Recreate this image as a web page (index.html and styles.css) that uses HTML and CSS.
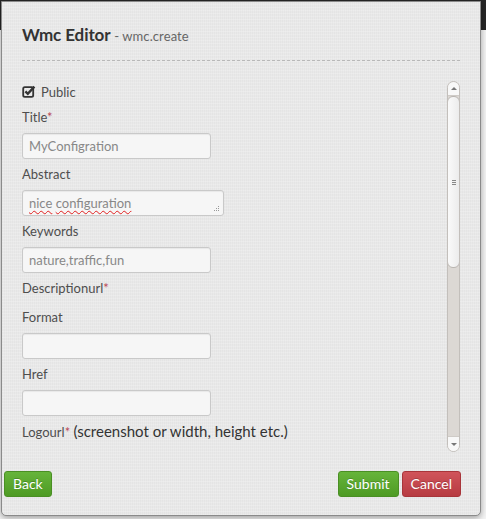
FILE: index.html
```html
<!DOCTYPE html>
<html lang="en">
<head>
<meta charset="utf-8">
<title>Wmc Editor</title>
<link rel="stylesheet" href="styles.css">
</head>
<body>
<div class="navbar"></div>
<div class="modal">
  <div class="modal-header">
    <h3 class="modal-title">Wmc Editor <small class="subtitle">- wmc.create</small></h3>
  </div>
  <div class="modal-body">
    <form class="form">
      <label class="check-row">
        <svg class="check-icon" width="14" height="13" viewBox="0 0 14 13">
          <rect x="1.2" y="2.2" width="10" height="9.6" rx="1.6" fill="none" stroke="#333" stroke-width="1.8"/>
          <path d="M3.4 6.4 L5.8 8.8 L12.4 1.6" fill="none" stroke="#333" stroke-width="2.4" stroke-linejoin="miter"/>
        </svg>
        <span>Public</span>
      </label>
      <label class="field-label">Title<span class="req">*</span></label>
      <div class="input">MyConfigration</div>
      <label class="field-label">Abstract</label>
      <div class="input textarea"><span class="misspelled">nice</span> <span class="misspelled">configuration</span>
        <svg class="grip" width="7" height="7" viewBox="0 0 7 7">
          <rect x="5" y="1" width="1" height="1" fill="#999"/>
          <rect x="3" y="3" width="1" height="1" fill="#999"/>
          <rect x="5" y="3" width="1" height="1" fill="#999"/>
          <rect x="1" y="5" width="1" height="1" fill="#999"/>
          <rect x="3" y="5" width="1" height="1" fill="#999"/>
          <rect x="5" y="5" width="1" height="1" fill="#999"/>
        </svg>
      </div>
      <label class="field-label">Keywords</label>
      <div class="input">nature,traffic,fun</div>
      <label class="field-label field-label-gap">Descriptionurl<span class="req">*</span></label>
      <label class="field-label">Format</label>
      <div class="input"></div>
      <label class="field-label">Href</label>
      <div class="input"></div>
      <label class="field-label">Logourl<span class="req">*</span> <span class="hint">(screenshot or width, height etc.)</span></label>
    </form>
    <div class="scrollbar">
      <div class="sb-btn sb-up"><span class="tri-up"></span></div>
      <div class="sb-thumb"><span class="grip-line"></span><span class="grip-line"></span><span class="grip-line"></span></div>
      <div class="sb-track"></div>
      <div class="sb-btn sb-down"><span class="tri-down"></span></div>
    </div>
  </div>
  <div class="modal-footer">
    <button class="btn btn-success">Back</button>
    <div class="footer-right">
      <button class="btn btn-success">Submit</button>
      <button class="btn btn-danger">Cancel</button>
    </div>
  </div>
</div>
</body>
</html>
```
FILE: styles.css
```css
html, body {
  margin: 0;
  padding: 0;
}
body {
  background: #f4f4f4;
  font-family: Lato, "Liberation Sans", sans-serif;
  font-size: 13px;
  color: #4e4e4e;
  position: relative;
  width: 486px;
  height: 519px;
  overflow: hidden;
}
.navbar {
  height: 30px;
  background: #262626;
}
.modal {
  position: absolute;
  left: 1px;
  top: 1px;
  width: 478px;
  height: 513px;
  background-color: #e9e9e9;
  background-image:
    repeating-linear-gradient(0deg, rgba(255,255,255,0.18) 0 1px, transparent 1px 3px),
    repeating-linear-gradient(90deg, rgba(0,0,0,0.02) 0 1px, transparent 1px 2px);
  border: 1px solid #8a8a8a;
  border-radius: 0 0 5px 5px;
  box-shadow: 0 2px 6px rgba(0,0,0,0.35);
  display: flex;
  flex-direction: column;
}
.modal-header {
  flex: none;
  margin: 0 20px;
  padding-top: 20px;
  height: 38px;
  border-bottom: 1px dashed #b8b8b8;
  box-sizing: content-box;
}
.modal-title {
  margin: 0;
  font-size: 17px;
  line-height: 26px;
  font-weight: 700;
  color: #333;
  letter-spacing: -0.1px;
}
.subtitle {
  font-size: 13px;
  font-weight: 400;
  color: #666;
  letter-spacing: 0.1px;
}
.modal-body {
  flex: none;
  display: flex;
  padding: 20px 20px 0 20px;
  height: 371px;
  overflow: hidden;
}
.form {
  flex: 1;
  display: flex;
  flex-direction: column;
  align-items: flex-start;
  margin: 0;
}
.form > * {
  flex-shrink: 0;
}
.check-row {
  display: flex;
  align-items: center;
  height: 22px;
  margin-bottom: 5px;
  gap: 5px;
}
.check-icon {
  display: block;
  margin-top: -1px;
}
.field-label {
  display: block;
  line-height: 18px;
  height: 18px;
  margin-bottom: 7px;
  white-space: nowrap;
}
.field-label-gap {
  margin-bottom: 11px;
}
.req {
  color: #b94a58;
}
.hint {
  font-size: 15px;
  color: #333;
}
.input {
  position: relative;
  box-sizing: border-box;
  width: 189px;
  height: 26px;
  margin-bottom: 6px;
  padding: 0 6px;
  line-height: 24px;
  font-size: 13px;
  color: #888;
  background: #f6f6f6;
  border: 1px solid #c9c9c9;
  border-radius: 3px;
  box-shadow: inset 0 1px 1px rgba(0,0,0,0.06);
  white-space: nowrap;
}
.textarea {
  width: 202px;
}
.misspelled {
  text-decoration: underline wavy #e02020;
  text-decoration-thickness: 1px;
  text-underline-offset: 2px;
}
.grip {
  position: absolute;
  right: 3px;
  bottom: 3px;
}
.scrollbar {
  width: 13px;
  flex: none;
  box-sizing: border-box;
  display: flex;
  flex-direction: column;
  border: 1px solid #c3bfbb;
  border-radius: 7px;
  background: #dcd8d4;
  overflow: hidden;
}
.sb-btn {
  height: 13px;
  flex: none;
  background: #f8f8f8;
  display: flex;
  align-items: center;
  justify-content: center;
}
.sb-up {
  border-bottom: 1px solid #cfcbc7;
}
.sb-down {
  border-top: 1px solid #cfcbc7;
  height: 14px;
}
.tri-up {
  width: 0;
  height: 0;
  border-left: 3px solid transparent;
  border-right: 3px solid transparent;
  border-bottom: 3px solid #777;
}
.tri-down {
  width: 0;
  height: 0;
  border-left: 3px solid transparent;
  border-right: 3px solid transparent;
  border-top: 3px solid #777;
}
.sb-thumb {
  height: 172px;
  flex: none;
  box-sizing: border-box;
  border: 1px solid #b9b5b1;
  border-radius: 6px;
  margin: 0 -1px;
  background: linear-gradient(90deg, #fafafa, #ececec);
  display: flex;
  flex-direction: column;
  align-items: center;
  justify-content: center;
  gap: 1px;
}
.grip-line {
  width: 4px;
  height: 1px;
  background: #888;
}
.sb-track {
  flex: 1;
}
.modal-footer {
  flex: none;
  display: flex;
  justify-content: space-between;
  align-items: flex-start;
  padding: 19px 19px 0 2px;
}
.footer-right {
  display: flex;
  gap: 3px;
}
.btn {
  font-family: Lato, "Liberation Sans", sans-serif;
  font-size: 14px;
  line-height: 24px;
  height: 26px;
  padding: 0 8px;
  color: #fff;
  border-radius: 3px;
  text-shadow: 0 -1px 0 rgba(0,0,0,0.2);
  cursor: pointer;
}
.btn-success {
  background: linear-gradient(#66b43a, #4e9b24);
  border: 1px solid #4a8f24;
}
.btn-danger {
  background: linear-gradient(#d0545a, #b73c42);
  border: 1px solid #a8353a;
}
```
